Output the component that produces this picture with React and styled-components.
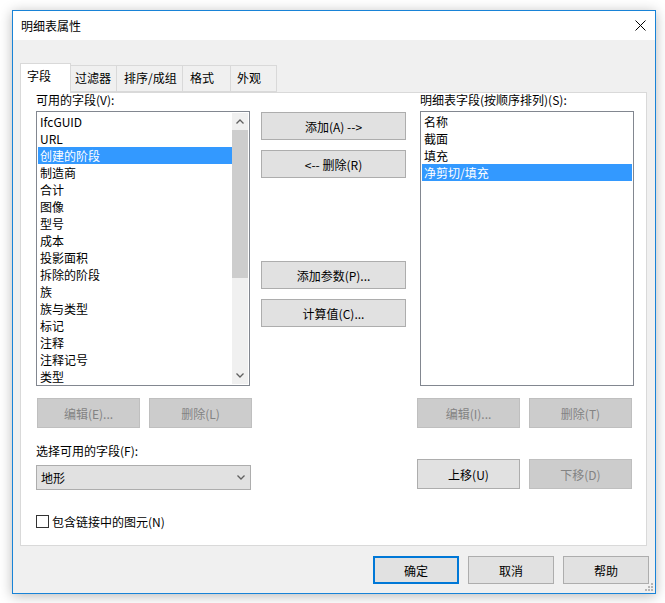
import React from 'react';
import styled, { createGlobalStyle } from 'styled-components';

const GlobalStyle = createGlobalStyle`
  html, body { margin: 0; padding: 0; background: #fff; }
  body {
    font-family: "Noto Sans CJK SC", "Noto Sans", sans-serif;
    font-size: 12px;
    color: #000;
  }
`;

const availableFields = [
  'IfcGUID', 'URL', '创建的阶段', '制造商', '合计', '图像', '型号', '成本',
  '投影面积', '拆除的阶段', '族', '族与类型', '标记', '注释', '注释记号', '类型',
];
const scheduledFields = ['名称', '截面', '填充', '净剪切/填充'];
const tabs = [
  { label: '字段', width: 51, pad: 6 },
  { label: '过滤器', width: 46, pad: 4 },
  { label: '排序/成组', width: 66, pad: 7 },
  { label: '格式', width: 48, pad: 7 },
  { label: '外观', width: 46, pad: 6 },
];

function Chevron({ up }) {
  return (
    <svg width="8" height="5" viewBox="0 0 8 5">
      <path
        d={up ? 'M0.5 4.5 L4 1 L7.5 4.5' : 'M0.5 0.5 L4 4 L7.5 0.5'}
        fill="none"
        stroke="#606060"
        strokeWidth="1.3"
      />
    </svg>
  );
}

function ListBox({ items, selected, scroll }) {
  return (
    <List>
      <Items>
        {items.map((it) => (
          <Item key={it} $active={it === selected}>{it}</Item>
        ))}
      </Items>
      {scroll && (
        <ScrollBar>
          <Arrow><Chevron up /></Arrow>
          <Track><Thumb /></Track>
          <Arrow><Chevron /></Arrow>
        </ScrollBar>
      )}
    </List>
  );
}

export default function App() {
  return (
    <>
      <GlobalStyle />
      <Page>
        <Window>
          <TitleBar>
            <span>明细表属性</span>
            <svg width="11" height="11" viewBox="0 0 11 11">
              <path d="M0.5 0.5 L10.5 10.5 M10.5 0.5 L0.5 10.5" stroke="#000" strokeWidth="1" />
            </svg>
          </TitleBar>
          <Body>
            <TabRow>
              {tabs.map((t, i) => (
                <Tab key={t.label} $w={t.width} $pad={t.pad} $active={i === 0}>{t.label}</Tab>
              ))}
            </TabRow>
            <Panel>
              <LeftCol>
                <Label>可用的字段(V):</Label>
                <ListBox items={availableFields} selected="创建的阶段" scroll />
                <BtnRow $top={12} $left={1}>
                  <Button $w={103} $h={30} disabled>编辑(E)...</Button>
                  <Button $w={103} $h={30} disabled>删除(L)</Button>
                </BtnRow>
                <Label $top={16}>选择可用的字段(F):</Label>
                <Combo>
                  <span>地形</span>
                  <Chevron />
                </Combo>
                <CheckRow>
                  <CheckBox />
                  <span>包含链接中的图元(N)</span>
                </CheckRow>
              </LeftCol>
              <MidCol>
                <Button $w={145} $h={28}>添加(A) --&gt;</Button>
                <Button $w={145} $h={28} $top={10}>&lt;-- 删除(R)</Button>
                <Button $w={145} $h={28} $top={83}>添加参数(P)...</Button>
                <Button $w={145} $h={28} $top={10}>计算值(C)...</Button>
              </MidCol>
              <RightCol>
                <Label $left={3}>明细表字段(按顺序排列)(S):</Label>
                <RightList>
                  <ListBox items={scheduledFields} selected="净剪切/填充" />
                </RightList>
                <BtnRow $top={12}>
                  <Button $w={103} $h={30} disabled>编辑(I)...</Button>
                  <Button $w={103} $h={30} disabled>删除(T)</Button>
                </BtnRow>
                <BtnRow $top={31}>
                  <Button $w={103} $h={30}>上移(U)</Button>
                  <Button $w={103} $h={30} disabled>下移(D)</Button>
                </BtnRow>
              </RightCol>
            </Panel>
            <Footer>
              <Button $w={86} $h={28} $primary>确定</Button>
              <Button $w={86} $h={28}>取消</Button>
              <Button $w={86} $h={28}>帮助</Button>
            </Footer>
          </Body>
          <Grip>
            <svg width="8" height="8" viewBox="0 0 8 8">
              {[[6, 0], [6, 3], [3, 3], [6, 6], [3, 6], [0, 6]].map(([x, y]) => (
                <rect key={`${x}-${y}`} x={x} y={y} width="2" height="2" fill="#b5b5b5" />
              ))}
            </svg>
          </Grip>
        </Window>
      </Page>
    </>
  );
}

const Page = styled.div`
  width: 665px;
  height: 603px;
  padding: 10px 0 0 12px;
  box-sizing: border-box;
  overflow: hidden;
`;

const Window = styled.div`
  position: relative;
  width: 644px;
  height: 584px;
  box-sizing: border-box;
  border: 1px solid #1883d7;
  background: #f0f0f0;
  box-shadow: 0 2px 12px rgba(0, 0, 0, 0.28);
  display: flex;
  flex-direction: column;
`;

const TitleBar = styled.div`
  height: 29px;
  flex: none;
  background: #fff;
  display: flex;
  align-items: center;
  justify-content: space-between;
  padding: 0 9px 1px 8px;
  box-sizing: border-box;
`;

const Body = styled.div`
  flex: 1;
  display: flex;
  flex-direction: column;
  padding: 23px 6px 9px 7px;
`;

const TabRow = styled.div`
  display: flex;
  align-items: flex-end;
  height: 29px;
  position: relative;
  z-index: 1;
`;

const Tab = styled.div`
  width: ${(p) => p.$w}px;
  height: ${(p) => (p.$active ? 30 : 27)}px;
  margin-bottom: ${(p) => (p.$active ? -1 : 0)}px;
  box-sizing: border-box;
  border: 1px solid #d9d9d9;
  border-bottom: ${(p) => (p.$active ? 'none' : '1px solid #d9d9d9')};
  border-left: ${(p) => (p.$active ? '1px solid #d9d9d9' : 'none')};
  background: ${(p) => (p.$active ? '#fff' : '#f0f0f0')};
  padding-left: ${(p) => p.$pad}px;
  line-height: ${(p) => (p.$active ? 24 : 23)}px;
  white-space: nowrap;
`;

const Panel = styled.div`
  width: 627px;
  height: 454px;
  box-sizing: border-box;
  border: 1px solid #d9d9d9;
  background: #fff;
  display: flex;
  padding-left: 15px;
`;

const LeftCol = styled.div`
  width: 216px;
  display: flex;
  flex-direction: column;
`;

const MidCol = styled.div`
  width: 145px;
  margin-left: 9px;
  padding-top: 19px;
  display: flex;
  flex-direction: column;
`;

const RightCol = styled.div`
  width: 216px;
  margin-left: 11px;
  display: flex;
  flex-direction: column;
`;

const Label = styled.div`
  line-height: 14px;
  margin: ${(p) => p.$top || 0}px 0 4px ${(p) => p.$left || 0}px;
  white-space: nowrap;
`;

const List = styled.div`
  width: 214px;
  height: 275px;
  box-sizing: border-box;
  border: 1px solid #828790;
  padding: 1px;
  display: flex;
  background: #fff;
`;

const RightList = styled.div`
  padding-left: 3px;
`;

const Items = styled.div`
  flex: 1;
  overflow: hidden;
`;

const Item = styled.div`
  height: 17px;
  line-height: 17px;
  padding-left: 2px;
  white-space: nowrap;
  background: ${(p) => (p.$active ? '#3399ff' : 'transparent')};
  color: ${(p) => (p.$active ? '#fff' : '#000')};
`;

const ScrollBar = styled.div`
  width: 16px;
  display: flex;
  flex-direction: column;
  background: #f0f0f0;
`;

const Arrow = styled.div`
  height: 17px;
  display: flex;
  align-items: center;
  justify-content: center;
`;

const Track = styled.div`
  flex: 1;
`;

const Thumb = styled.div`
  height: 148px;
  background: #cdcdcd;
`;

const BtnRow = styled.div`
  display: flex;
  gap: 9px;
  margin-top: ${(p) => p.$top || 0}px;
  margin-left: ${(p) => p.$left || 0}px;
`;

const Button = styled.button`
  width: ${(p) => p.$w}px;
  height: ${(p) => p.$h}px;
  margin: ${(p) => p.$top || 0}px 0 0 0;
  padding: 0;
  flex: none;
  font: inherit;
  box-sizing: border-box;
  background: ${(p) => (p.disabled ? '#cccccc' : '#e1e1e1')};
  border: ${(p) => (p.$primary ? '2px solid #0078d7' : p.disabled ? '1px solid #bfbfbf' : '1px solid #adadad')};
  color: ${(p) => (p.disabled ? '#838383' : '#000')};
  white-space: nowrap;
`;

const Combo = styled.div`
  width: 215px;
  height: 25px;
  margin-top: 3px;
  box-sizing: border-box;
  background: #e1e1e1;
  border: 1px solid #adadad;
  display: flex;
  align-items: center;
  justify-content: space-between;
  padding: 0 5px 0 4px;
`;

const CheckRow = styled.div`
  display: flex;
  align-items: center;
  gap: 3px;
  margin-top: 24px;
  height: 15px;
`;

const CheckBox = styled.div`
  width: 13px;
  height: 13px;
  box-sizing: border-box;
  border: 1px solid #333;
  background: #fff;
`;

const Footer = styled.div`
  display: flex;
  justify-content: flex-end;
  gap: 9px;
  margin-top: 10px;
`;

const Grip = styled.div`
  position: absolute;
  right: 2px;
  bottom: 2px;
  width: 8px;
  height: 8px;
  line-height: 0;
`;
